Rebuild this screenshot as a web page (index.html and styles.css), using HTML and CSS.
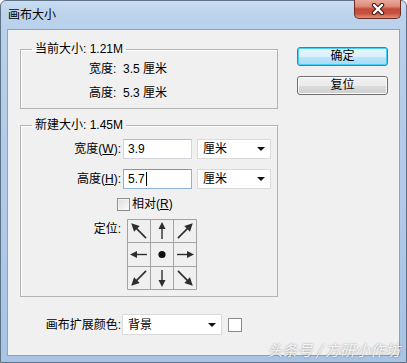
FILE: index.html
```html
<!DOCTYPE html>
<html lang="zh-CN">
<head>
<meta charset="utf-8">
<title>画布大小</title>
<link rel="stylesheet" href="styles.css">
</head>
<body>
<div class="window">
  <div class="titlebar">
    <span class="title">画布大小</span>
    <div class="close">
      <svg width="16" height="12" viewBox="0 0 16 12"><path d="M4 2 L12 10 M12 2 L4 10" stroke="#3a1a14" stroke-width="4.4" stroke-linecap="round"/><path d="M4 2 L12 10 M12 2 L4 10" stroke="#fff" stroke-width="2.4" stroke-linecap="round"/></svg>
    </div>
  </div>
  <div class="client">
    <div class="left">
      <fieldset class="group group-current">
        <legend>当前大小: 1.21M</legend>
        <div class="info-row">宽度:&nbsp;&nbsp;3.5 厘米</div>
        <div class="info-row">高度:&nbsp;&nbsp;5.3 厘米</div>
      </fieldset>
      <fieldset class="group group-new">
        <legend>新建大小: 1.45M</legend>
        <div class="form-row">
          <span class="label">宽度(<u>W</u>):</span>
          <div class="field">3.9</div>
          <div class="select unit"><span>厘米</span><i class="tri"></i></div>
        </div>
        <div class="form-row second">
          <span class="label">高度(<u>H</u>):</span>
          <div class="field focused">5.7<span class="caret"></span></div>
          <div class="select unit"><span>厘米</span><i class="tri"></i></div>
        </div>
        <div class="check-row">
          <span class="checkbox"></span><span class="check-label">相对(<u>R</u>)</span>
        </div>
        <div class="anchor-row">
          <span class="label anchor-label">定位:</span>
          <svg class="anchor" width="70" height="71" viewBox="0 0 70 71">
            <defs>
              <g id="ar">
                <path d="M0 8 L0 -3" stroke="#2e2e2e" stroke-width="1.4"/>
                <polygon points="0,-9 -3.5,-2 3.5,-2" fill="#2e2e2e"/>
              </g>
              <g id="ad">
                <path d="M0 10 L0 -4" stroke="#2e2e2e" stroke-width="1.6"/>
                <polygon points="0,-11 -4,-3 4,-3" fill="#2e2e2e"/>
              </g>
            </defs>
            <rect x="0" y="0" width="70" height="71" fill="#f0f0f0"/>
            <path d="M0.5 0.5 H69.5 V70.5 H0.5 Z M23.5 0.5 V70.5 M46.5 0.5 V70.5 M0.5 23.5 H69.5 M0.5 47.5 H69.5" fill="none" stroke="#a3a3a3" stroke-width="1"/>
            <use href="#ad" transform="translate(12 12) rotate(-45)"/>
            <use href="#ar" transform="translate(35 12)"/>
            <use href="#ad" transform="translate(58 12) rotate(45)"/>
            <use href="#ar" transform="translate(12 35.5) rotate(-90)"/>
            <circle cx="35" cy="35.5" r="3.6" fill="#111"/>
            <use href="#ar" transform="translate(58 35.5) rotate(90)"/>
            <use href="#ad" transform="translate(12 59) rotate(-135)"/>
            <use href="#ar" transform="translate(35 59) rotate(180)"/>
            <use href="#ad" transform="translate(58 59) rotate(135)"/>
          </svg>
        </div>
      </fieldset>
      <div class="ext-row">
        <span class="label ext-label">画布扩展颜色:</span>
        <div class="select ext"><span>背景</span><i class="tri"></i></div>
        <span class="swatch"></span>
      </div>
    </div>
    <div class="buttons">
      <div class="btn default">确定</div>
      <div class="btn">复位</div>
    </div>
  </div>
  <div class="watermark">头条号 / 方研小作坊</div>
</div>
</body>
</html>
```

FILE: styles.css
```css
* { box-sizing: border-box; }
html, body { margin: 0; padding: 0; }
body {
  width: 407px;
  height: 363px;
  overflow: hidden;
  font-family: "Liberation Sans", "Noto Sans CJK SC", sans-serif;
  font-size: 12px;
  color: #000;
  background: #fff;
}
.window {
  position: relative;
  width: 407px;
  height: 363px;
  border: 1px solid #5d7187;
  border-radius: 6px 6px 0 0;
  background: linear-gradient(180deg, #c9dcf1 0px, #bcd3ec 14px, #b6cfea 40px, #b0cae7 200px, #a8c4e4 363px);
  display: flex;
  flex-direction: column;
}
.titlebar {
  height: 28px;
  display: flex;
  align-items: flex-start;
}
.title {
  margin-left: 7px;
  margin-top: 6px;
  line-height: 16px;
  font-size: 12px;
}
.close {
  margin-left: auto;
  margin-right: 5px;
  margin-top: -1px;
  width: 47px;
  height: 19px;
  border: 1px solid #6b2d22;
  border-top: none;
  border-radius: 0 0 5px 5px;
  background: linear-gradient(180deg, #e9a99b 0%, #dd8a79 35%, #c64a36 50%, #c7533f 75%, #e0907b 100%);
  display: flex;
  align-items: center;
  justify-content: center;
}
.client {
  margin-left: 6px;
  width: 393px;
  height: 327px;
  border: 1px solid #8ea3bb;
  background: #f0f0f0;
  display: flex;
  padding: 11px 0 0 12px;
}
.left {
  width: 258px;
  display: flex;
  flex-direction: column;
}
.group {
  margin: 0;
  min-inline-size: 0;
  border: 1px solid #b4b4b4;
  box-shadow: inset 1px 1px 0 #fff;
}
.group legend {
  margin-left: 11px;
  padding: 0 3px;
  line-height: 16px;
  font-size: 12px;
}
.group-current {
  padding: 0 0 3px 0;
}
.info-row {
  height: 24px;
  line-height: 24px;
  padding-left: 68px;
}
.group-new {
  margin-top: 8px;
  padding: 6px 0 6px 0;
}
.form-row {
  display: flex;
  align-items: center;
  height: 20px;
}
.form-row.second { margin-top: 10px; }
.label {
  width: 100px;
  text-align: right;
  line-height: 16px;
  flex: none;
}
.field {
  margin-left: 2px;
  width: 69px;
  height: 20px;
  border: 1px solid #d2d4da;
  border-top-color: #b9bcc4;
  background: #fff;
  padding-left: 4px;
  line-height: 18px;
  display: flex;
  align-items: center;
}
.field.focused {
  border-color: #8fb2dc;
  border-top-color: #6f97c9;
}
.caret {
  display: inline-block;
  width: 1px;
  height: 14px;
  background: #000;
  margin-left: 1px;
}
.select {
  height: 20px;
  border: 1px solid #dadada;
  background: #fff;
  display: flex;
  align-items: center;
  padding: 0 5px 0 5px;
}
.select span { flex: 1; line-height: 16px; }
.tri {
  width: 0;
  height: 0;
  border-left: 4px solid transparent;
  border-right: 4px solid transparent;
  border-top: 4px solid #111;
}
.unit {
  margin-left: 5px;
  width: 74px;
}
.check-row {
  margin-top: 8px;
  height: 14px;
  display: flex;
  align-items: center;
  padding-left: 96px;
}
.checkbox {
  width: 13px;
  height: 13px;
  border: 1px solid #8e8f8f;
  background: linear-gradient(135deg, #dcdcdc, #fbfbfb);
  box-shadow: inset 0 0 0 1px #f4f4f4;
}
.check-label {
  margin-left: 2px;
  line-height: 16px;
}
.anchor-row {
  margin-top: 8px;
  display: flex;
  align-items: flex-start;
}
.anchor-label { padding-top: 2px; }
.anchor {
  display: block;
  margin-left: 6px;
}
.ext-row {
  margin-top: 17px;
  display: flex;
  align-items: center;
  height: 21px;
}
.ext-label { width: 101px; }
.ext {
  margin-left: 1px;
  width: 100px;
  height: 21px;
  padding-left: 5px;
}
.swatch {
  margin-left: 6px;
  width: 14px;
  height: 14px;
  border: 1px solid #8a8a8a;
  background: #fff;
}
.buttons {
  margin-left: 19px;
  margin-top: 6px;
  display: flex;
  flex-direction: column;
  gap: 10px;
}
.btn {
  width: 91px;
  height: 19px;
  border: 1px solid #707070;
  border-radius: 3px;
  background: linear-gradient(180deg, #f2f2f2 0%, #ebebeb 50%, #dddddd 51%, #cfcfcf 100%);
  text-align: center;
  line-height: 17px;
  font-size: 12px;
  box-shadow: inset 0 0 0 1px #fcfcfc;
}
.btn.default {
  border-color: #3c7fb1;
  background: linear-gradient(180deg, #eaf6fd 0%, #d9f0fc 50%, #bee6fd 51%, #a7d9f5 100%);
  box-shadow: inset 0 0 0 1px #48d0f6;
}
.watermark {
  position: absolute;
  right: 6px;
  bottom: 3px;
  font-size: 15px;
  line-height: 18px;
  font-style: italic;
  color: rgba(255, 255, 255, 0.9);
  text-shadow: 0 0 2px rgba(0, 0, 0, 0.45);
  font-family: "Noto Sans CJK SC", sans-serif;
  letter-spacing: 0px;
}
```
